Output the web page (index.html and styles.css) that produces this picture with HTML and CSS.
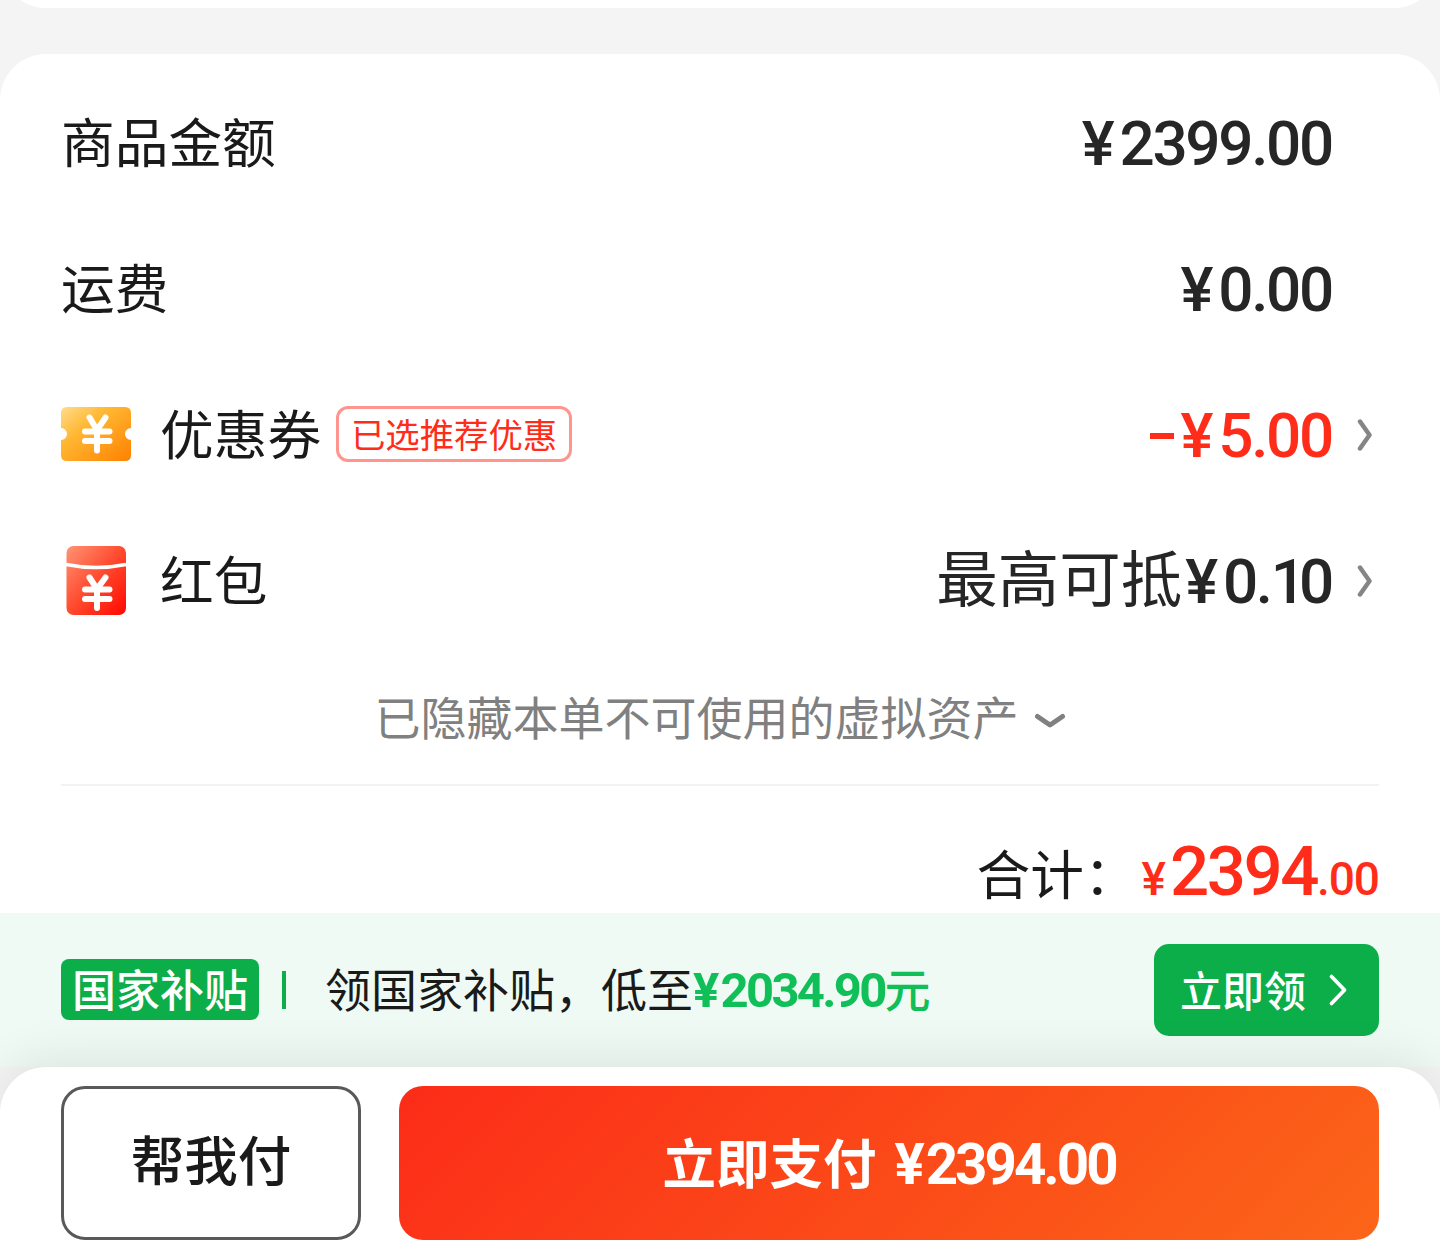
FILE: index.html
```html
<!DOCTYPE html>
<html lang="zh-CN">
<head>
    <meta charset="UTF-8">
    <meta name="viewport" content="width=device-width, initial-scale=1.0">
    <title>确认订单</title>
    <link rel="stylesheet" href="styles.css">
</head>
<body>
    <div class="page">
        <div class="prev-card"></div>

        <div class="card">
            <div class="row">
                <div class="label">商品金额</div>
                <div class="price"><span class="yen">¥</span>2399.00</div>
            </div>
            <div class="row">
                <div class="label">运费</div>
                <div class="price"><span class="yen">¥</span>0.00</div>
            </div>
            <div class="row has-arrow">
                <svg class="icon" viewBox="0 0 70 70">
                    <defs>
                        <linearGradient id="coupon" x1="0" y1="0" x2="1" y2="1">
                            <stop offset="0" stop-color="#ffdc8c"/>
                            <stop offset="0.35" stop-color="#ffb833"/>
                            <stop offset="1" stop-color="#ff8000"/>
                        </linearGradient>
                    </defs>
                    <path d="M6 8H64Q70 8 70 14V29A6 6 0 0 0 70 41V56Q70 62 64 62H6Q0 62 0 56V41A6 6 0 0 0 0 29V14Q0 8 6 8Z" fill="url(#coupon)"/>
                    <path d="M28.500 18.500L36 31L44.500 18.500M24 32.500H48.500M24 42H48.500M36 32V51.500" fill="none" stroke="#fff" stroke-width="6" stroke-linecap="round"/>
                </svg>
                <div class="label">优惠券</div>
                <div class="tag">已选推荐优惠</div>
                <div class="price red"><span class="minus"></span><span class="yen">¥</span>5.00</div>
                <svg class="arrow" viewBox="0 0 16 34"><path d="M3 3.500L12.500 17L3 30.500" fill="none" stroke="#858585" stroke-width="4.500" stroke-linecap="round" stroke-linejoin="round"/></svg>
            </div>
            <div class="row has-arrow">
                <svg class="icon" viewBox="0 0 70 70">
                    <defs>
                        <linearGradient id="packet" x1="0" y1="0" x2="1" y2="1">
                            <stop offset="0" stop-color="#ff9475"/>
                            <stop offset="0.5" stop-color="#ff4a2e"/>
                            <stop offset="1" stop-color="#ff0800"/>
                        </linearGradient>
                    </defs>
                    <rect x="5.500" y="1" width="59.500" height="69" rx="7" fill="url(#packet)"/>
                    <path d="M5 19.500Q35 25.500 65 19.500" fill="none" stroke="#fff" stroke-width="3.500"/>
                    <path d="M28.500 32.500L36 44L44.500 32.500M24 44.500H48.500M24 54H48.500M36 44V63" fill="none" stroke="#fff" stroke-width="6" stroke-linecap="round"/>
                </svg>
                <div class="label">红包</div>
                <div class="price"><span class="max">最高可抵</span><span class="yen">¥</span>0.<span class="one">1</span>0</div>
                <svg class="arrow" viewBox="0 0 16 34"><path d="M3 3.500L12.500 17L3 30.500" fill="none" stroke="#858585" stroke-width="4.500" stroke-linecap="round" stroke-linejoin="round"/></svg>
            </div>

            <div class="hidden-assets">
                <span class="hidden-text">已隐藏本单不可使用的虚拟资产</span>
                <svg class="down" viewBox="0 0 32 16"><path d="M3.500 3.500L16 12L28.500 3.500" fill="none" stroke="#808080" stroke-width="5" stroke-linecap="round" stroke-linejoin="round"/></svg>
            </div>

            <div class="total">
                <span class="total-label">合计：</span>
                <span class="total-price"><small class="total-yen">¥</small>2394<small class="cents">.00</small></span>
            </div>
        </div>

        <div class="subsidy">
            <div class="badge">国家补贴</div>
            <div class="bar"></div>
            <div class="subsidy-text">领国家补贴，低至<span class="green"><span class="num"><span class="num-yen">¥</span>2034.90</span>元</span></div>
            <button class="get">
                <span class="get-text">立即领</span>
                <svg class="get-arrow" viewBox="0 0 20 34"><path d="M3.500 3.500L16.500 17L3.500 30.500" fill="none" stroke="#fff" stroke-width="3.800" stroke-linecap="round" stroke-linejoin="round"/></svg>
            </button>
        </div>

        <div class="footer">
            <button class="help-pay">帮我付</button>
            <button class="pay"><span class="pay-text">立即支付</span><span class="pay-num"><span class="num-yen">¥</span>2394.00</span></button>
        </div>
    </div>
</body>
</html>
```

FILE: styles.css
```css
* {
    box-sizing: border-box;
}
body {
    margin: 0;
    background: #f4f4f4;
    color: #1a1a1a;
    font-family: "Noto Sans CJK SC", sans-serif;
}
button {
    font-family: inherit;
    padding: 0;
    border: none;
}
.page {
    width: 1440px;
    height: 1258px;
    overflow: hidden;
    display: flex;
    flex-direction: column;
}
.prev-card {
    height: 100px;
    margin-top: -92px;
    margin-bottom: 46px;
    flex: none;
    background: #fff;
    border-radius: 46px;
}
.card {
    height: 859px;
    flex: none;
    padding: 16px 61px 0;
    background: #fff;
    border-radius: 46px 46px 0 0;
}
.row {
    height: 146px;
    padding-right: 47px;
    display: flex;
    align-items: center;
}
.row.has-arrow {
    padding-right: 6px;
}
.label {
    padding-bottom: 7px;
    font-size: 53.700px;
    line-height: 80px;
}
.icon {
    width: 70px;
    height: 70px;
    margin: -2px 29px 0 0;
}
.tag {
    height: 56px;
    width: 236px;
    margin: -2px 0 0 15px;
    border: 3px solid #ff958c;
    border-radius: 12px;
    color: #ff2c1a;
    font-size: 34.400px;
    line-height: 48px;
    text-align: center;
    white-space: nowrap;
}
.price {
    margin-left: auto;
    padding-top: 1px;
    display: flex;
    align-items: center;
    color: #262626;
    font-family: Roboto, "Noto Sans CJK SC", sans-serif;
    font-size: 62px;
    font-weight: 500;
    letter-spacing: -2.300px;
    line-height: 80px;
}
.price.red {
    color: #ff2c1a;
}
.yen {
    margin-right: 7px;
}
.one {
    letter-spacing: -7px;
}
.minus {
    width: 24px;
    height: 6px;
    margin-right: 7px;
    background: #ff2c1a;
}
.max {
    margin-right: 3px;
    padding-bottom: 11px;
    font-family: "Noto Sans CJK SC", sans-serif;
    font-size: 61.500px;
    font-weight: 400;
    letter-spacing: 0;
    line-height: 70px;
}
.arrow {
    width: 16px;
    height: 34px;
    margin-left: 25px;
}
.hidden-assets {
    height: 130px;
    display: flex;
    align-items: center;
    justify-content: center;
    gap: 15px;
    color: #808080;
    font-size: 46px;
    line-height: 60px;
}
.hidden-text {
    padding-bottom: 9px;
}
.down {
    width: 32px;
    height: 16px;
    margin-top: 3px;
}
.total {
    height: 127px;
    padding-top: 41px;
    border-top: 2px solid #f2f2f2;
    display: flex;
    align-items: baseline;
    justify-content: flex-end;
}
.total-label {
    margin-right: 4px;
    font-size: 53.700px;
    line-height: 90px;
}
.total-price {
    color: #ff2c1a;
    font-family: Roboto, sans-serif;
    font-size: 69px;
    font-weight: 500;
    letter-spacing: -2.500px;
    line-height: 90px;
}
.total-price small {
    font-size: 46px;
    letter-spacing: -1px;
}
.total-yen {
    margin-right: 5px;
}
.subsidy {
    height: 154px;
    flex: none;
    padding: 0 61px;
    display: flex;
    align-items: center;
    background: #effaf5;
}
.badge {
    width: 198px;
    height: 61px;
    margin-top: -2px;
    border-radius: 8px;
    background: #0cae4a;
    color: #fff;
    font-size: 44px;
    font-weight: 500;
    line-height: 58px;
    text-align: center;
}
.bar {
    width: 4px;
    height: 38px;
    margin: 0 39px 0 23px;
    background: #0cae4a;
}
.subsidy-text {
    padding-bottom: 2px;
    font-size: 46px;
    line-height: 70px;
    white-space: nowrap;
}
.green {
    color: #10bf58;
    font-weight: 500;
}
.num {
    font-family: Roboto, sans-serif;
    font-size: 49px;
    font-weight: 700;
    letter-spacing: -2.700px;
}
.num-yen {
    margin-right: 4px;
}
.get {
    width: 225px;
    height: 92px;
    margin-left: auto;
    padding-right: 5px;
    display: flex;
    align-items: center;
    justify-content: center;
    gap: 22px;
    border-radius: 15px;
    background: #0cae4a;
    color: #fff;
    font-size: 42px;
    font-weight: 500;
}
.get-text {
    padding-bottom: 4px;
}
.get-arrow {
    width: 20px;
    height: 34px;
}
.footer {
    position: relative;
    height: 191px;
    flex: none;
    padding: 19px 61px 0;
    display: flex;
    gap: 38px;
    background: #fff;
    border-radius: 46px 46px 0 0;
    box-shadow: 0 -10px 46px rgba(0, 0, 0, 0.08);
}
.help-pay {
    width: 300px;
    height: 154px;
    padding-bottom: 11px;
    border: 3px solid #595959;
    border-radius: 24px;
    background: #fff;
    color: #1a1a1a;
    font-size: 53.500px;
    font-weight: 500;
}
.pay {
    flex: 1;
    height: 154px;
    display: flex;
    align-items: center;
    justify-content: center;
    gap: 18px;
    border-radius: 24px;
    background: linear-gradient(135deg, #fc2c18 0%, #fb6619 100%);
    color: #fff;
    font-size: 53.500px;
    font-weight: 700;
}
.pay-text {
    padding-bottom: 6px;
}
.pay-num {
    padding-top: 3px;
    font-family: Roboto, sans-serif;
    font-size: 56.500px;
    letter-spacing: -3px;
}
```
